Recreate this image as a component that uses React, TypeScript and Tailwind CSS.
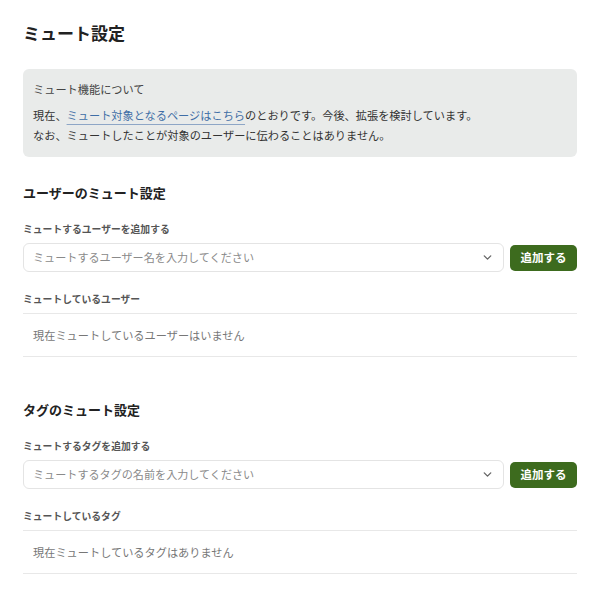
import { ChevronDown } from "lucide-react";

const font = { fontFamily: '"Noto Sans CJK JP", "Noto Sans", sans-serif' };

function MuteSection({
  heading,
  addLabel,
  placeholder,
  listLabel,
  emptyText,
  className,
}: {
  heading: string;
  addLabel: string;
  placeholder: string;
  listLabel: string;
  emptyText: string;
  className: string;
}) {
  return (
    <section className={className}>
      <h2 className="text-[13px] font-bold leading-[20px] text-[#222]">{heading}</h2>
      <div className="mt-[18px] text-[9.8px] font-bold leading-[16px] text-[#555]">{addLabel}</div>
      <div className="mt-[6px] flex items-center gap-[6px]">
        <div className="flex h-[29px] flex-1 items-center justify-between rounded-[6px] border border-[#e4e4e4] bg-white pl-[9px] pr-[9px]">
          <span className="text-[11.1px] text-[#8a8a8a]">{placeholder}</span>
          <ChevronDown className="h-[13px] w-[13px] text-[#666]" strokeWidth={2.5} />
        </div>
        <button className="h-[26px] w-[67px] rounded-[5px] bg-[#3d6b1e] text-[11.5px] font-bold text-white">
          追加する
        </button>
      </div>
      <div className="mt-[19px] text-[9.8px] font-bold leading-[16px] text-[#555]">{listLabel}</div>
      <div className="mt-[6px] border-y border-[#e8e8e8] pb-[11px] pl-[10px] pt-[11px]">
        <div className="text-[11.2px] leading-[20px] text-[#777]">{emptyText}</div>
      </div>
    </section>
  );
}

export default function App() {
  return (
    <div className="min-h-[595px] bg-white px-[23px] pt-[21px]" style={font}>
      <h1 className="text-[17px] font-bold leading-[24px] text-[#222]">ミュート設定</h1>

      <div className="mt-[24px] rounded-[6px] bg-[#e9ebea] px-[10px] pb-[12px] pt-[10px] text-[11.2px] text-[#333]">
        <div className="leading-[20px] text-[#444]">ミュート機能について</div>
        <div className="mt-[6px] leading-[20px]">
          現在、
          <a className="text-[#3f6ea6] underline decoration-[#8ea6c6] underline-offset-[4px]">
            ミュート対象となるページはこちら
          </a>
          のとおりです。今後、拡張を検討しています。
        </div>
        <div className="leading-[20px]">なお、ミュートしたことが対象のユーザーに伝わることはありません。</div>
      </div>

      <MuteSection
        className="mt-[26px]"
        heading="ユーザーのミュート設定"
        addLabel="ミュートするユーザーを追加する"
        placeholder="ミュートするユーザー名を入力してください"
        listLabel="ミュートしているユーザー"
        emptyText="現在ミュートしているユーザーはいません"
      />

      <MuteSection
        className="mt-[43px]"
        heading="タグのミュート設定"
        addLabel="ミュートするタグを追加する"
        placeholder="ミュートするタグの名前を入力してください"
        listLabel="ミュートしているタグ"
        emptyText="現在ミュートしているタグはありません"
      />
    </div>
  );
}
